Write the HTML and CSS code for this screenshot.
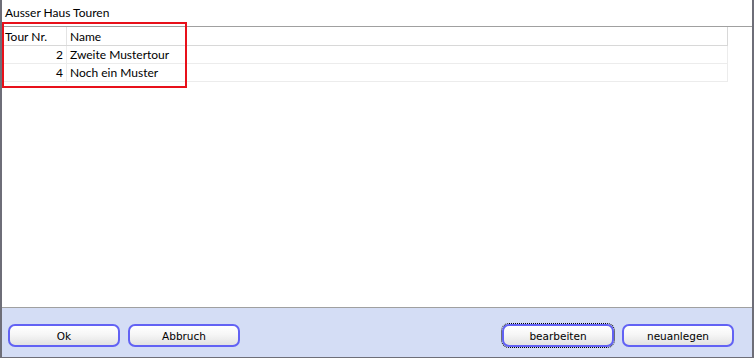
FILE: index.html
```html
<!DOCTYPE html>
<html lang="de">
<head>
<meta charset="UTF-8" />
<title>Ausser Haus Touren</title>
<link rel="stylesheet" href="styles.css">
</head>
<body>
<div class="window">
  <header class="titlebar">Ausser Haus Touren</header>

  <!-- ------ TOUR LIST ------ -->
  <main class="content">
    <table class="grid">
      <thead>
        <tr><th class="col-nr">Tour Nr.</th><th class="col-name">Name</th></tr>
      </thead>
      <tbody>
        <tr><td class="num">2</td><td>Zweite Mustertour</td></tr>
        <tr><td class="num">4</td><td>Noch ein Muster</td></tr>
      </tbody>
    </table>
    <div class="mark"></div>
  </main>

  <!-- ------ BUTTON BAR ------ -->
  <footer class="buttons">
    <div class="group">
      <button class="btn">Ok</button>
      <button class="btn">Abbruch</button>
    </div>
    <div class="group">
      <button class="btn focus">bearbeiten</button>
      <button class="btn">neuanlegen</button>
    </div>
  </footer>
</div>
</body>
</html>
```

FILE: styles.css
```css
/* ---------- Global ---------- */
body {
  margin: 0;
  font-family: Lato, "Liberation Sans", Arial, sans-serif;
  font-size: 12px;
  color: #000;
  background: #fff;
}

.window {
  width: 754px;
  height: 358px;
  box-sizing: border-box;
  display: flex;
  flex-direction: column;
  border-left: 2px solid #6e6e78;
  border-right: 2px solid #6e6e78;
  border-bottom: 1px solid #6e6e78;
  position: relative;
}

/* ---------- Title ---------- */
.titlebar {
  height: 26px;
  line-height: 25px;
  padding-left: 3px;
  border-bottom: 1px solid #a0a0a0;
}

/* ---------- Grid ---------- */
.content {
  flex: 1;
  position: relative;
}
.grid {
  border-collapse: collapse;
  width: 726px;
  table-layout: fixed;
}
.grid th, .grid td {
  height: 17px;
  padding: 0 3px;
  font-weight: normal;
  text-align: left;
  white-space: nowrap;
  border-bottom: 1px solid #ececec;
  border-right: 1px solid #ececec;
}
.grid th {
  height: 18px;
  border-bottom: 1px solid #d8d8d8;
  border-right: 1px solid #e4e4e4;
}
.grid th.col-name { border-right-color: #d8d8d8; }
.col-nr { width: 58px; }
.grid td.num { text-align: right; }

/* red highlight frame drawn over the list */
.mark {
  position: absolute;
  left: 0;
  top: -5px;
  width: 181px;
  height: 62px;
  border: 2px solid #e8101a;
}

/* ---------- Button bar ---------- */
.buttons {
  height: 50px;
  box-sizing: border-box;
  border-top: 1px solid #a0a0a0;
  background: #d4ddf5;
  display: flex;
  justify-content: space-between;
  padding: 16px 18px 0 6px;
}
.group { display: flex; gap: 8px; }
.btn {
  width: 112px;
  height: 23px;
  box-sizing: border-box;
  border: 2px solid #6262f4;
  border-radius: 7px;
  background: linear-gradient(#ffffff 0%, #f6f6f6 45%, #e2e2e2 100%);
  font-family: "DejaVu Sans", Tahoma, sans-serif;
  font-size: 10.5px;
  color: #000;
  padding: 0;
}
.btn.focus { outline: 1px dotted #000; outline-offset: 0; }
```
